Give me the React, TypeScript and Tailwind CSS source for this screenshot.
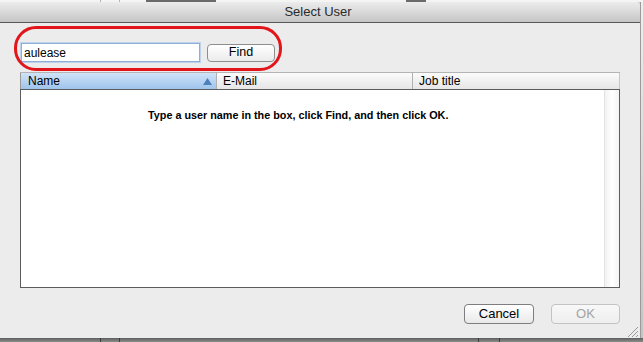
import React from "react";

const font = { fontFamily: '"Liberation Sans", Arial, sans-serif' };

function ResizeGrip() {
  return (
    <svg width="12" height="12" viewBox="0 0 12 12" className="absolute right-[2px] bottom-[1px]">
      <line x1="2" y1="12" x2="12" y2="2" stroke="#9a9a9a" strokeWidth="1" />
      <line x1="6" y1="12" x2="12" y2="6" stroke="#9a9a9a" strokeWidth="1" />
      <line x1="10" y1="12" x2="12" y2="10" stroke="#9a9a9a" strokeWidth="1" />
    </svg>
  );
}

function SortArrow() {
  return (
    <svg width="9" height="7" viewBox="0 0 9 7">
      <polygon points="4.5,0 9,7 0,7" fill="#4f7fb8" />
    </svg>
  );
}

export default function App() {
  return (
    <div className="w-[643px] h-[342px] flex flex-col overflow-hidden bg-[#d0d0d0]" style={font}>
      {/* window behind, peeking out on top */}
      <div className="h-[2px] bg-[#f4f4f4] flex">
        <div className="w-[100px]" />
        <div className="w-px bg-[#b5b5b5]" />
        <div className="w-[18px]" />
        <div className="w-px bg-[#b5b5b5]" />
        <div className="ml-[26px] w-[70px] bg-[#6a6a6a]" />
        <div className="ml-[190px] w-[20px] bg-[#6a6a6a]" />
      </div>

      <div className="flex flex-1 min-h-0">
        <div className="w-[640px] flex flex-col">
          {/* title bar */}
          <div className="h-[21px] flex items-center justify-center border-b border-[#585858] bg-gradient-to-b from-[#ececec] to-[#c6c6c6] rounded-tr-[4px]">
            <span className="text-[13px] text-[#2a2a2a] ml-[-4px]">Select User</span>
          </div>

          {/* body */}
          <div className="relative flex-1 bg-[#ececec] flex flex-col pt-[20px]">
            <div className="absolute left-[14px] top-[3px] w-[268px] h-[45px] border-[3px] border-[#e2151b] rounded-[22px]" />

            <div className="flex items-center pl-[21px] gap-[7px] h-[19px]">
              <div className="w-[179px] h-[19px] bg-white border border-[#8fb0d6] shadow-[0_0_0_1px_#bdd3ec] flex items-center px-[2px]">
                <span className="text-[12px] text-black">aulease</span>
              </div>
              <div className="w-[68px] h-[18px] rounded-[4px] border border-[#8e8e8e] bg-gradient-to-b from-white to-[#ebebeb] flex items-center justify-center">
                <span className="text-[12.5px] text-black">Find</span>
              </div>
            </div>

            {/* table */}
            <div className="mt-[10px] ml-[20px] w-[600px] flex flex-col">
              <div className="h-[17px] flex border-t border-[#b4b4b4] text-[12px] text-black">
                <div className="w-[196px] flex items-center justify-between pl-[7px] pr-[4px] bg-gradient-to-b from-[#d0e3f7] to-[#9fc4ec] border-l border-[#9a9a9a]">
                  <span>Name</span>
                  <SortArrow />
                </div>
                <div className="w-[196px] flex items-center pl-[6px] border-l border-[#b0b0b0] bg-gradient-to-b from-[#fbfbfb] to-[#e6e6e6]">
                  <span>E-Mail</span>
                </div>
                <div className="flex-1 flex items-center pl-[6px] border-l border-[#b0b0b0] border-r border-r-[#c8c8c8] bg-gradient-to-b from-[#fbfbfb] to-[#e6e6e6]">
                  <span>Job title</span>
                </div>
              </div>
              <div className="h-[199px] flex bg-white border border-[#5c5c5c]">
                <div className="flex-1 pt-[12px] pl-[127px]">
                  <span className="text-[10.8px] font-bold text-black">
                    Type a user name in the box, click Find, and then click OK.
                  </span>
                </div>
                <div className="w-[15px] border-l border-[#e2e2e2] bg-gradient-to-r from-[#f2f2f2] via-white to-[#f4f4f4]" />
              </div>
            </div>

            {/* buttons */}
            <div className="mt-[16px] flex justify-end gap-[17px] pr-[20px]">
              <div className="w-[70px] h-[20px] rounded-[4px] border border-[#7e7e7e] bg-gradient-to-b from-white to-[#e9e9e9] flex items-center justify-center">
                <span className="text-[13px] text-black">Cancel</span>
              </div>
              <div className="w-[69px] h-[20px] rounded-[4px] border border-[#c3c3c3] bg-gradient-to-b from-[#f8f8f8] to-[#eeeeee] flex items-center justify-center">
                <span className="text-[13px] text-[#a3a3a3]">OK</span>
              </div>
            </div>

            <ResizeGrip />
          </div>
        </div>
        <div className="w-[3px] bg-gradient-to-b from-[#efefef] to-[#c3c3c3] border-l border-[#9a9a9a]" />
      </div>

      {/* shadow / background below the sheet */}
      <div className="h-[4px] flex bg-gradient-to-b from-[#5e5e5e] to-[#8c8c8c]">
        <div className="w-[100px]" />
        <div className="w-px bg-[#3c3c3c]" />
        <div className="w-[18px]" />
        <div className="w-px bg-[#3c3c3c]" />
        <div className="w-[358px]" />
        <div className="w-px bg-[#3c3c3c]" />
        <div className="w-[20px]" />
        <div className="w-px bg-[#3c3c3c]" />
      </div>
    </div>
  );
}
